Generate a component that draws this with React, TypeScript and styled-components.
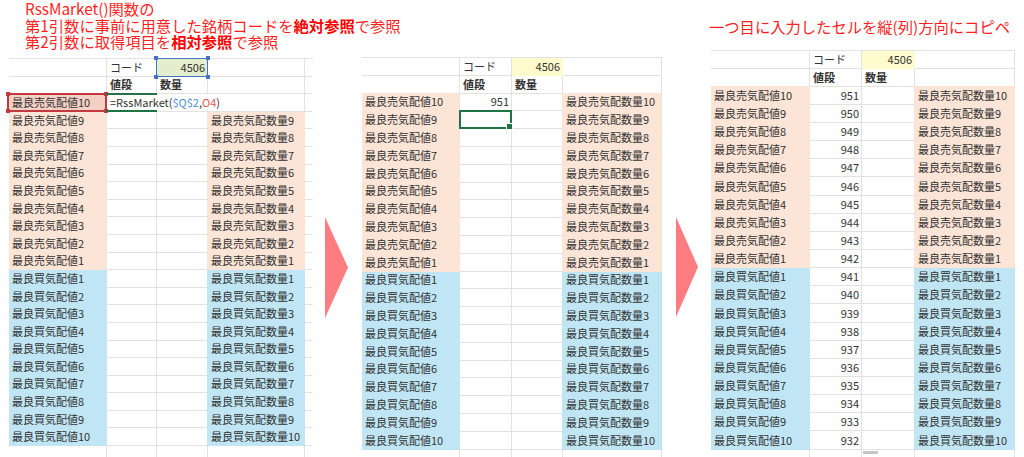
import React from 'react';
import styled, { createGlobalStyle, css } from 'styled-components';

const GRID = '#e2e2e2';
const FILLS = {
  none: '#ffffff',
  pink: '#fce4d6',
  blue: '#c0e6f5',
  yellow: '#fffbcc',
  code: '#e4edce',
  selPink: '#f4cfc3',
};
type Fill = keyof typeof FILLS;
type Mark = 'ref' | 'active' | 'cursor' | 'edit';

interface CellSpec {
  text?: React.ReactNode;
  fill?: Fill;
  align?: 'left' | 'right';
  bold?: boolean;
  span?: number;
  mark?: Mark;
  noRight?: boolean;
  tab?: boolean;
}

const GlobalStyle = createGlobalStyle`
  html, body { margin: 0; padding: 0; background: #ffffff; overflow: hidden; }
  body { font-family: "Noto Sans CJK JP", "Noto Sans", sans-serif; }
`;

const Page = styled.div`
  display: flex;
  align-items: flex-start;
  width: 1024px;
  height: 457px;
  padding-left: 9px;
  box-sizing: border-box;
  overflow: hidden;
`;

const Column = styled.div<{ $w: number }>`
  display: flex;
  flex-direction: column;
  width: ${(p) => p.$w}px;
  flex: none;
`;

const Title = styled.div<{ $h: number; $pt: number; $pl: number }>`
  height: ${(p) => p.$h}px;
  box-sizing: border-box;
  padding-top: ${(p) => p.$pt}px;
  padding-left: ${(p) => p.$pl}px;
  color: #ff1f1f;
  font-family: "Noto Sans CJK JP", sans-serif;
  font-size: 15.3px;
  line-height: 16.7px;
  white-space: nowrap;
`;

const TitleLine = styled.div``;

const Strong = styled.b`
  font-weight: 700;
  color: #ff0000;
`;

const ArrowBox = styled.div<{ $ml: number; $mr: number }>`
  flex: none;
  padding-top: 217px;
  margin-left: ${(p) => p.$ml}px;
  margin-right: ${(p) => p.$mr}px;
  svg { display: block; }
`;

const Sheet = styled.div<{ $cols: number[]; $rowH: number; $top: number }>`
  display: grid;
  grid-template-columns: ${(p) => p.$cols.map((c) => `${c}px`).join(' ')};
  grid-auto-rows: ${(p) => p.$rowH}px;
  margin-top: ${(p) => p.$top}px;
  border-top: 1px solid ${GRID};
  font-family: "Noto Sans CJK JP", sans-serif;
  font-size: 11px;
  color: #333333;
`;

const Cell = styled.div<{
  $bg: string;
  $right: string;
  $bottom: string;
  $align: 'left' | 'right';
  $bold: boolean;
  $span: number;
}>`
  position: relative;
  box-sizing: border-box;
  display: flex;
  align-items: center;
  justify-content: ${(p) => (p.$align === 'right' ? 'flex-end' : 'flex-start')};
  padding: 0 2px 0 3px;
  grid-column: span ${(p) => p.$span};
  background: ${(p) => p.$bg};
  border-right: 1px solid ${(p) => p.$right};
  border-bottom: 1px solid ${(p) => p.$bottom};
  font-weight: ${(p) => (p.$bold ? 700 : 400)};
  white-space: nowrap;
  line-height: 1;
`;

const Overlay = styled.span<{ $kind: Mark }>`
  position: absolute;
  pointer-events: none;
  z-index: 2;
  box-sizing: border-box;
  ${(p) =>
    p.$kind === 'ref' &&
    css`
      top: -1px; left: -1px; right: -1px; bottom: -1px;
      border: 1px solid #4472c4;
    `}
  ${(p) =>
    p.$kind === 'active' &&
    css`
      top: -1px; left: -2px; right: -1px; bottom: -1px;
      border: 2px solid #c23a40;
    `}
  ${(p) =>
    p.$kind === 'cursor' &&
    css`
      top: -1px; left: -1px; right: -1px; bottom: -1px;
      border: 2px solid #217346;
    `}
  ${(p) =>
    p.$kind === 'edit' &&
    css`
      top: -1px; left: -1px; width: 51px; bottom: -1px;
      border-top: 2px solid #217346;
      border-bottom: 2px solid #217346;
    `}
`;

const Handle = styled.span<{ $pos: 'tl' | 'tr' | 'bl' | 'br'; $color: string }>`
  position: absolute;
  width: 4px;
  height: 4px;
  background: ${(p) => p.$color};
  z-index: 3;
  ${(p) => (p.$pos[0] === 't' ? 'top: -3px;' : 'bottom: -3px;')}
  ${(p) => (p.$pos[1] === 'l' ? 'left: -3px;' : 'right: -3px;')}
`;

const CursorHandle = styled.span`
  position: absolute;
  width: 5px;
  height: 5px;
  right: -3px;
  bottom: -3px;
  background: #217346;
  border: 1px solid #ffffff;
  box-sizing: content-box;
  z-index: 3;
`;

const Tab = styled.span`
  align-self: flex-start;
  margin: 1px 0 0 -2px;
  width: 15px;
  height: 3px;
  background: #c6c6c6;
`;

const RefText = styled.span<{ $c: string }>`
  color: ${(p) => p.$c};
`;

const Corners: React.FC<{ color: string }> = ({ color }) => (
  <>
    <Handle $pos="tl" $color={color} />
    <Handle $pos="tr" $color={color} />
    <Handle $pos="bl" $color={color} />
    <Handle $pos="br" $color={color} />
  </>
);

const MarkLayer: React.FC<{ kind: Mark }> = ({ kind }) => {
  if (kind === 'ref')
    return (
      <Overlay $kind="ref">
        <Corners color="#4472c4" />
      </Overlay>
    );
  if (kind === 'active')
    return (
      <Overlay $kind="active">
        <Corners color="#c23a40" />
      </Overlay>
    );
  if (kind === 'cursor')
    return (
      <Overlay $kind="cursor">
        <CursorHandle />
      </Overlay>
    );
  return <Overlay $kind="edit" />;
};

const fillOf = (c?: CellSpec): Fill => (c && c.fill ? c.fill : 'none');

const expand = (row: CellSpec[]): Fill[] => {
  const out: Fill[] = [];
  row.forEach((c) => {
    const n = c.span || 1;
    for (let i = 0; i < n; i++) out.push(fillOf(c));
  });
  return out;
};

const SheetView: React.FC<{ cols: number[]; rowH: number; top: number; rows: CellSpec[][] }> = ({
  cols,
  rowH,
  top,
  rows,
}) => {
  const fillGrid = rows.map(expand);
  return (
    <Sheet $cols={cols} $rowH={rowH} $top={top}>
      {rows.map((row, r) => {
        let colIdx = 0;
        return row.map((c, i) => {
          const span = c.span || 1;
          const start = colIdx;
          colIdx += span;
          const own = fillOf(c);
          const next = fillOf(row[i + 1]);
          const below = fillGrid[r + 1] ? fillGrid[r + 1][start] : 'none';
          let right = GRID;
          if (c.noRight) right = 'transparent';
          else if (own !== 'none') right = FILLS[own];
          else if (next !== 'none' && next !== 'yellow' && next !== 'code') right = FILLS[next];
          let bottom = GRID;
          if (own !== 'none') bottom = FILLS[own];
          else if (below === 'pink' || below === 'blue') bottom = FILLS[below];
          return (
            <Cell
              key={`${r}-${i}`}
              $bg={FILLS[own]}
              $right={right}
              $bottom={bottom}
              $align={c.align || 'left'}
              $bold={!!c.bold}
              $span={span}
            >
              {c.text}
              {c.tab && <Tab />}
              {c.mark && <MarkLayer kind={c.mark} />}
            </Cell>
          );
        });
      })}
    </Sheet>
  );
};

const labels = Array.from({ length: 20 }, (_, i) => {
  const sell = i < 10;
  const n = sell ? 10 - i : i - 9;
  return {
    fill: (sell ? 'pink' : 'blue') as Fill,
    price: sell ? `最良売気配値${n}` : `最良買気配値${n}`,
    qty: sell ? `最良売気配数量${n}` : `最良買気配数量${n}`,
    value: String(951 - i),
  };
});

const formula = (
  <>
    =RssMarket(<RefText $c="#4f8fd8">$Q$2</RefText>,<RefText $c="#e05656">O4</RefText>)
  </>
);

const rows1: CellSpec[][] = [
  [{}, { text: 'コード' }, { text: '4506', align: 'right', fill: 'code', mark: 'ref' }, {}, { noRight: true }],
  [{}, { text: '値段', bold: true }, { text: '数量', bold: true }, {}, { noRight: true }],
  ...labels.map((l, i): CellSpec[] =>
    i === 0
      ? [
          { text: l.price, fill: 'selPink', mark: 'active' },
          { text: formula, span: 3, mark: 'edit' },
          { noRight: true },
        ]
      : [{ text: l.price, fill: l.fill }, {}, {}, { text: l.qty, fill: l.fill }, { noRight: true }]
  ),
  [{}, {}, {}, {}, { noRight: true }],
];

const rows2: CellSpec[][] = [
  [{}, { text: 'コード' }, { text: '4506', align: 'right', fill: 'yellow' }, {}],
  [{}, { text: '値段', bold: true }, { text: '数量', bold: true }, {}],
  ...labels.map((l, i): CellSpec[] => [
    { text: l.price, fill: l.fill },
    { text: i === 0 ? '951' : '', align: 'right', mark: i === 1 ? 'cursor' : undefined },
    {},
    { text: l.qty, fill: l.fill },
  ]),
  [{}, {}, {}, {}],
];

const rows3: CellSpec[][] = [
  [{}, { text: 'コード' }, { text: '4506', align: 'right', fill: 'yellow' }, {}],
  [{}, { text: '値段', bold: true }, { text: '数量', bold: true }, {}],
  ...labels.map((l): CellSpec[] => [
    { text: l.price, fill: l.fill },
    { text: l.value, align: 'right' },
    {},
    { text: l.qty, fill: l.fill },
  ]),
  [{}, {}, { tab: true }, {}],
];

const Arrow: React.FC<{ ml: number; mr: number; w: number; h: number }> = ({ ml, mr, w, h }) => (
  <ArrowBox $ml={ml} $mr={mr}>
    <svg width={w} height={h} viewBox={`0 0 ${w} ${h}`}>
      <polygon points={`0,0 ${w},${h / 2} 0,${h}`} fill="#ff7c80" />
    </svg>
  </ArrowBox>
);

export default function App() {
  return (
    <>
      <GlobalStyle />
      <Page>
        <Column $w={304}>
          <Title $h={58} $pt={0} $pl={16}>
            <TitleLine>RssMarket()関数の</TitleLine>
            <TitleLine>
              第1引数に事前に用意した銘柄コードを<Strong>絶対参照</Strong>で参照
            </TitleLine>
            <TitleLine>
              第2引数に取得項目を<Strong>相対参照</Strong>で参照
            </TitleLine>
          </Title>
          <SheetView cols={[98, 50, 51, 97, 8]} rowH={17.6} top={0} rows={rows1} />
        </Column>
        <Arrow ml={12} mr={14} w={23} h={101} />
        <Column $w={300}>
          <SheetView cols={[98, 52, 51, 99]} rowH={17.8} top={57} rows={rows2} />
        </Column>
        <Arrow ml={14} mr={13} w={22} h={100} />
        <Column $w={304}>
          <Title $h={49.5} $pt={17.5} $pl={0} style={{ marginLeft: -2 }}>
            <TitleLine>一つ目に入力したセルを縦(列)方向にコピペ</TitleLine>
          </Title>
          <SheetView cols={[99, 52, 53, 100]} rowH={18.15} top={0} rows={rows3} />
        </Column>
      </Page>
    </>
  );
}
